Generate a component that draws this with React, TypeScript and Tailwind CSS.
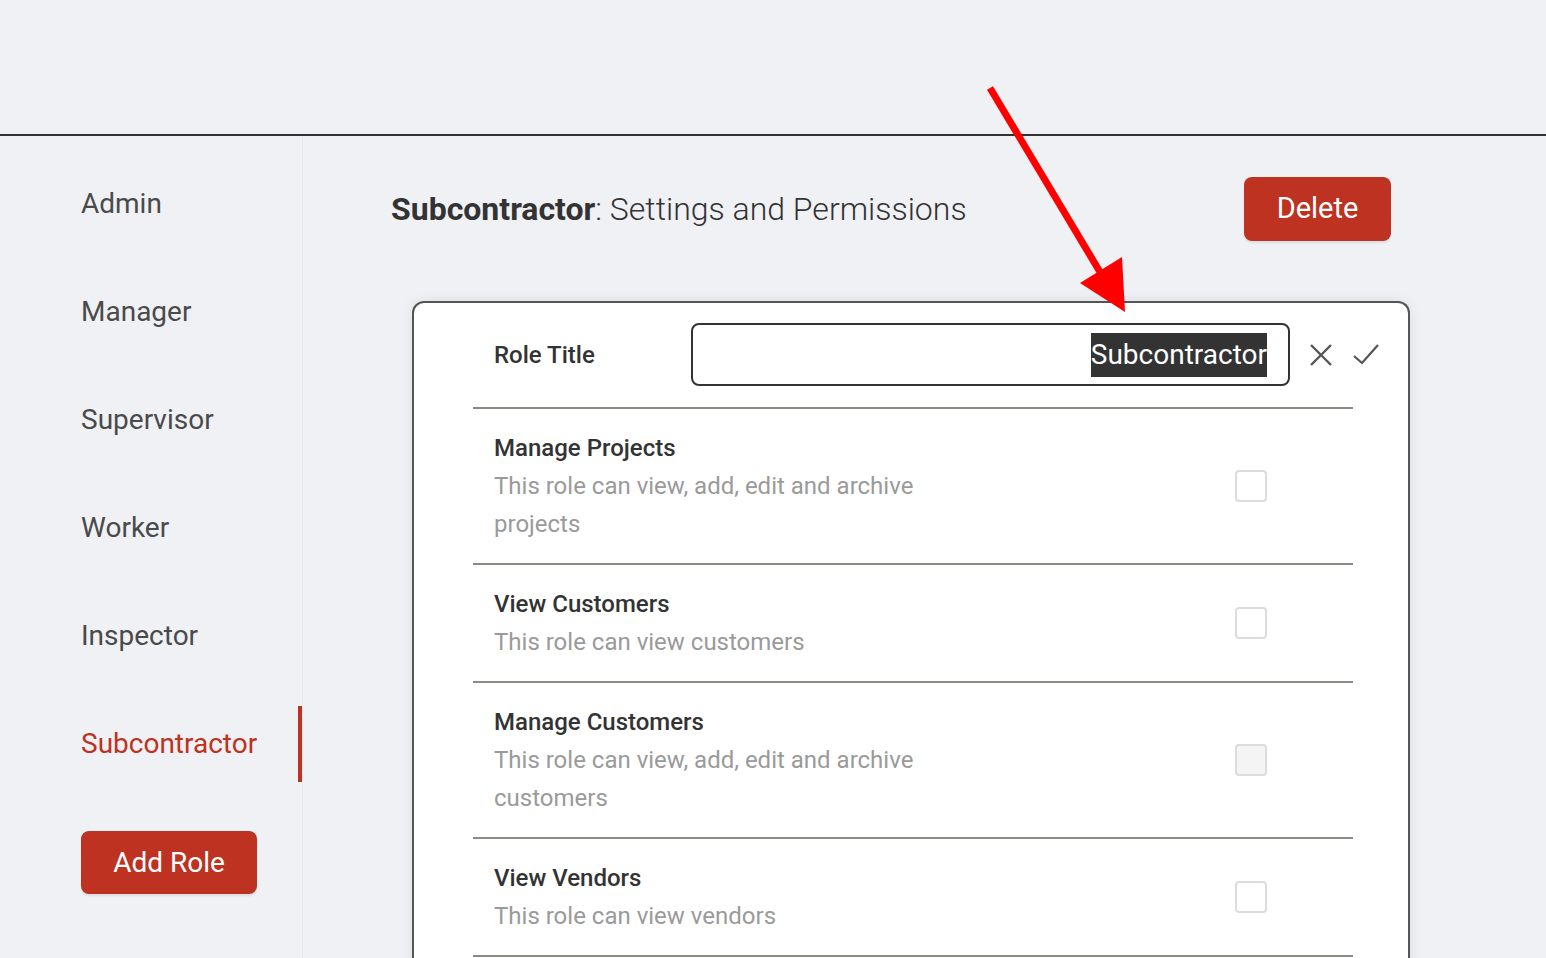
import React from 'react';

const roles = ['Admin', 'Manager', 'Supervisor', 'Worker', 'Inspector', 'Subcontractor'];

const permissions = [
  { title: 'Manage Projects', desc: 'This role can view, add, edit and archive projects', disabled: false },
  { title: 'View Customers', desc: 'This role can view customers', disabled: false },
  { title: 'Manage Customers', desc: 'This role can view, add, edit and archive customers', disabled: true },
  { title: 'View Vendors', desc: 'This role can view vendors', disabled: false },
];

const PermissionRow: React.FC<{ title: string; desc: string; disabled: boolean }> = ({ title, desc, disabled }) => (
  <div className="flex items-center justify-between border-b-2 border-[#8b8b86] py-5 pl-[21px] pr-[86px]">
    <div className="w-[460px]">
      <h4 className="text-[24px] font-medium leading-[38px] text-[#333]">{title}</h4>
      <p className="text-[24px] leading-[38px] text-[#9a9a9a]">{desc}</p>
    </div>
    <div
      className={`h-8 w-8 rounded-[4px] border-2 border-[#dcdcdc] ${disabled ? 'bg-[#f4f4f4]' : 'bg-white'}`}
    />
  </div>
);

export default function App() {
  return (
    <div className="relative h-[958px] w-full overflow-hidden bg-[#f0f1f5] font-['Roboto',sans-serif]">
      <div className="h-[136px] border-b-2 border-[#333]" />

      <div className="flex">
        <aside className="flex h-[822px] w-[303px] shrink-0 flex-col gap-8 border-r border-[#e8e9ec] pt-[30px]">
          {roles.map((role) => {
            const active = role === 'Subcontractor';
            return (
              <div
                key={role}
                className={`flex h-[76px] items-center pl-[81px] text-[28px] ${
                  active ? 'border-r-4 border-[#bd3221] text-[#bd3221]' : 'text-[#4a4a4a]'
                }`}
              >
                {role}
              </div>
            );
          })}
          <div className="pl-[81px] pt-[17px]">
            <button className="h-[63px] w-[176px] rounded-lg bg-[#bd3221] text-[28px] text-white shadow-[0_2px_2px_rgba(0,0,0,0.08)]">
              Add Role
            </button>
          </div>
        </aside>

        <main className="flex-1 pl-[88px] pt-[41px]">
          <div className="flex w-[1000px] items-center justify-between">
            <h1 className="text-[32px] text-[#333]">
              <span className="font-bold">Subcontractor</span>
              <span className="font-light">: Settings and Permissions</span>
            </h1>
            <button className="h-16 w-[147px] rounded-lg bg-[#bd3221] text-[29px] text-white shadow-[0_2px_2px_rgba(0,0,0,0.08)]">
              Delete
            </button>
          </div>

          <div className="ml-[21px] mt-[60px] w-[998px] rounded-t-xl border-2 border-b-0 border-[#555] bg-white pb-10 pl-[59px] pr-[55px] shadow-[0_0_14px_rgba(0,0,0,0.08)]">
            <div className="flex items-center border-b-2 border-[#8b8b86] pb-[21px] pl-[21px] pt-[20px]">
              <span className="w-[197px] text-[24px] font-medium text-[#333]">Role Title</span>
              <div className="-mr-[60px] flex items-center">
                <div className="flex h-[63px] w-[599px] items-center justify-end rounded-lg border-2 border-[#333] pr-[21px]">
                  <span className="bg-[#333] text-[28px] leading-[44px] text-white">Subcontractor</span>
                </div>
                <div className="ml-[18px] flex items-center gap-[18px]">
                  <svg width="26" height="26" viewBox="0 0 26 26" fill="none" stroke="#555" strokeWidth="2.4">
                    <path d="M3 3L23 23M23 3L3 23" />
                  </svg>
                  <svg width="28" height="26" viewBox="0 0 28 26" fill="none" stroke="#555" strokeWidth="2.2">
                    <path d="M2 14L10 21L26 3" />
                  </svg>
                </div>
              </div>
            </div>
            {permissions.map((p) => (
              <PermissionRow key={p.title} {...p} />
            ))}
          </div>
        </main>
      </div>

      <svg className="pointer-events-none absolute left-0 top-0" width="1546" height="958">
        <line x1="990" y1="88" x2="1100" y2="272" stroke="#ff0000" strokeWidth="7" />
        <polygon points="1080,283 1122,257 1125,312" fill="#ff0000" />
      </svg>
    </div>
  );
}
